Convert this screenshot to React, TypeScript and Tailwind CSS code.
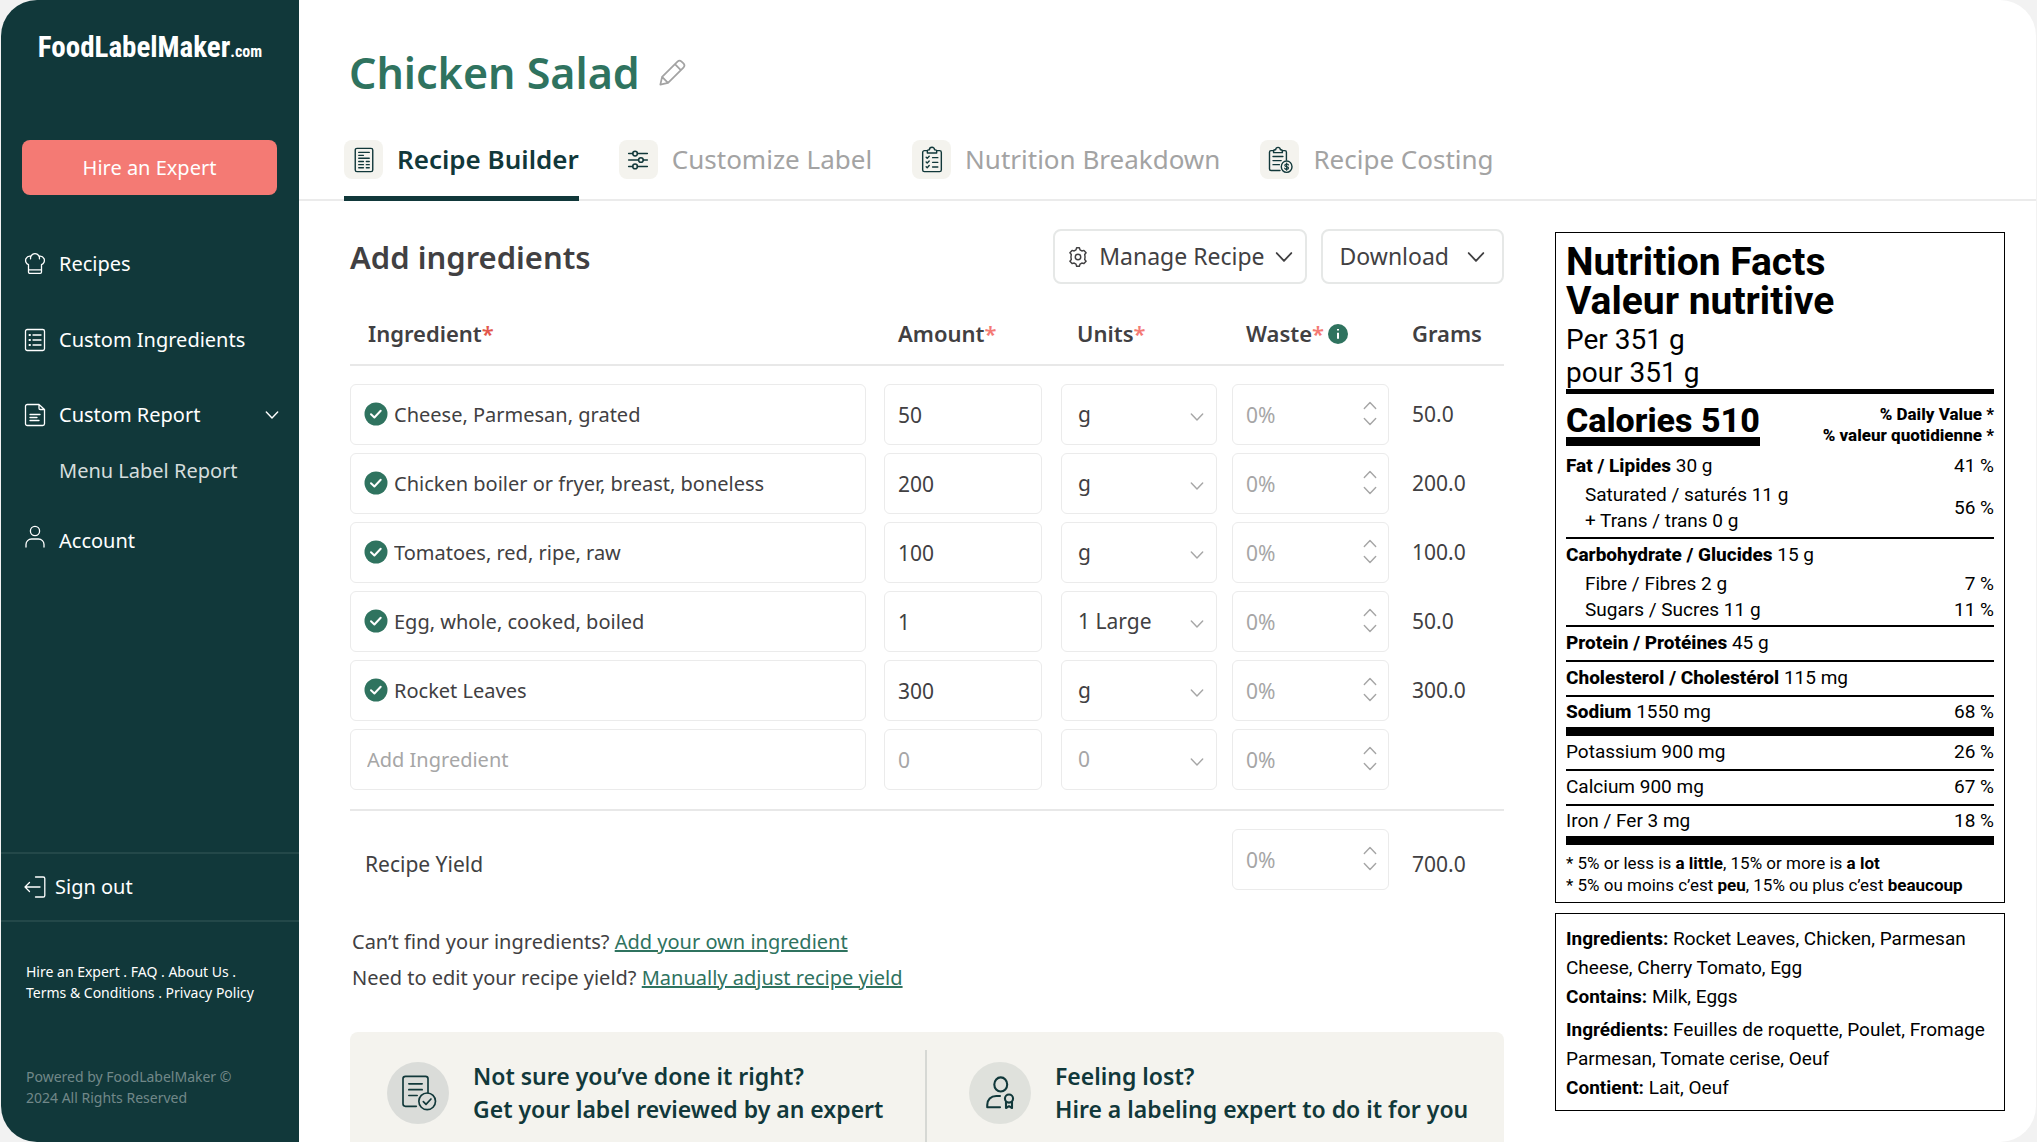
import { useState } from 'react';
import type { ReactNode } from 'react';

const navLink = 'flex items-center text-[20px] leading-8';

const ingredients = [
  { name: 'Cheese, Parmesan, grated', amount: '50', unit: 'g', grams: '50.0' },
  { name: 'Chicken boiler or fryer, breast, boneless', amount: '200', unit: 'g', grams: '200.0' },
  { name: 'Tomatoes, red, ripe, raw', amount: '100', unit: 'g', grams: '100.0' },
  { name: 'Egg, whole, cooked, boiled', amount: '1', unit: '1 Large', grams: '50.0' },
  { name: 'Rocket Leaves', amount: '300', unit: 'g', grams: '300.0' },
];

function Icon({ size, width = 1.3, children }: { size: string; width?: number; children: ReactNode }) {
  return (
    <svg
      viewBox="0 0 24 24"
      className={`${size} shrink-0`}
      fill="none"
      stroke="currentColor"
      strokeWidth={width}
      strokeLinecap="round"
      strokeLinejoin="round"
      aria-hidden="true"
    >
      {children}
    </svg>
  );
}

function Chevron({ size, up = false }: { size: string; up?: boolean }) {
  return (
    <svg viewBox="0 0 16 10" className={`${size} shrink-0`} fill="none" stroke="currentColor" strokeWidth="1.6" strokeLinecap="round" strokeLinejoin="round" aria-hidden="true">
      <path d={up ? 'M1.5 8.5 8 1.5l6.5 7' : 'M1.5 1.5 8 8.5l6.5-7'} />
    </svg>
  );
}

function ChefHat() {
  return (
    <Icon size="h-6 w-6">
      <path d="M5.5 12.7A4.6 4.6 0 0 1 3 6.6a4.6 4.6 0 0 1 5-2.4 4.4 4.4 0 0 1 8 0 4.6 4.6 0 0 1 5 2.4 4.6 4.6 0 0 1-2.5 6.100v7.3a1.3 1.3 0 0 1-1.3 1.3H6.8a1.3 1.3 0 0 1-1.3-1.3zM5.5 17.8h13M8 4.2c-.5.9-.6 1.7-.4 2.6M16 4.2c.5.9.6 1.7.4 2.6" />
    </Icon>
  );
}

function ListBox() {
  return (
    <Icon size="h-6 w-6">
      <rect x="2.5" y="1.5" width="19" height="21" rx="1.8" />
      <path d="M10 7h8M10 12h8M10 17h8" />
      <path d="M6.5 7h.5M6.5 12h.5M6.5 17h.5" strokeWidth="2" />
    </Icon>
  );
}

function ReportFile() {
  return (
    <Icon size="h-6 w-6">
      <path d="M16 1.5H4.3a1.8 1.8 0 0 0-1.8 1.8v17.4a1.8 1.8 0 0 0 1.8 1.8h15.4a1.8 1.8 0 0 0 1.8-1.8V6.5zM16 1.5v3.8a1.2 1.2 0 0 0 1.2 1.2h4.3M7 11.5h10M7 14.5h7M7 17.5h9" />
    </Icon>
  );
}

function Person() {
  return (
    <Icon size="h-6 w-6 self-start">
      <circle cx="12" cy="6" r="4.6" />
      <path d="M3 22v-2.5A5.5 5.5 0 0 1 8.5 14h7a5.5 5.5 0 0 1 5.5 5.5V22" />
    </Icon>
  );
}

function SignOut() {
  return (
    <Icon size="h-6 w-6">
      <path d="M12.5 2h7.7a1.6 1.6 0 0 1 1.6 1.6v16.8a1.6 1.6 0 0 1-1.6 1.6h-7.7M17 12H2M6.5 7.5 2 12l4.5 4.5" />
    </Icon>
  );
}

function RecipeSheet() {
  return (
    <Icon size="h-7 w-7" width={1.2}>
      <rect x="4.5" y="2" width="15" height="20" rx="1.5" />
      <path d="M7.5 5.5h9M7.5 8h4M7.5 10.5h9M7.5 13.3h4M14 13.3h2.5M7.5 16h4M14 16h2.5M7.5 18.7h4M14 18.7h2.5" />
    </Icon>
  );
}

function Sliders() {
  return (
    <Icon size="h-7 w-7" width={1.3}>
      <path d="M4 6.5h3.5M11.5 6.5H20M4 12h8.5M16.5 12H20M4 17.5h3.5M11.5 17.5H20" />
      <circle cx="9.5" cy="6.5" r="2" />
      <circle cx="14.5" cy="12" r="2" />
      <circle cx="9.5" cy="17.5" r="2" />
    </Icon>
  );
}

function Checklist() {
  return (
    <Icon size="h-7 w-7" width={1.2}>
      <path d="M8 4H5.5A1.5 1.5 0 0 0 4 5.5v15A1.5 1.5 0 0 0 5.5 22h13a1.5 1.5 0 0 0 1.5-1.5v-15A1.5 1.5 0 0 0 18.5 4H16" />
      <path d="M8 6h8V4.3a1 1 0 0 0-1-1h-.8a2.2 2.2 0 0 0-4.4 0H9a1 1 0 0 0-1 1zM7 9.7l.9.9 1.7-1.8M12.5 10h4.500M7 13.7l.9.9 1.7-1.8M12.5 14h4.500M7 17.7l.9.9 1.7-1.8M12.5 18h4.500" />
    </Icon>
  );
}

function CostSheet() {
  return (
    <Icon size="h-7 w-7" width={1.2}>
      <path d="M6.5 4H4.3A1.3 1.3 0 0 0 3 5.3v14.4A1.3 1.3 0 0 0 4.3 21H12M14 4h2.2a1.3 1.3 0 0 1 1.3 1.3V12" />
      <path d="M6.5 5.7H14V4.2a1 1 0 0 0-1-1h-.7a2 2 0 0 0-4 0h-.8a1 1 0 0 0-1 1zM6 9h8.5M6 12.5h7M6 16h5.5" />
      <ellipse cx="17.7" cy="17.7" rx="4.6" ry="4.9" />
      <path d="M19.3 16.3c-.3-.7-.9-.9-1.6-.9-.9 0-1.6.4-1.6 1.1 0 1.6 3.2.8 3.2 2.4 0 .7-.7 1.1-1.6 1.1-.8 0-1.4-.3-1.7-1M17.7 14.6v6.2" strokeWidth="1" />
    </Icon>
  );
}

function Pencil() {
  return (
    <Icon size="h-7 w-7" width={1.5}>
      <path d="M2 22l1.5-6.6L16.7 2.2a2.5 2.5 0 0 1 3.5 0l1.6 1.6a2.5 2.5 0 0 1 0 3.5L8.6 20.5zM3.5 15.4l5.1 5.1M14.5 4.4l5.1 5.1" />
    </Icon>
  );
}

function Cog() {
  return (
    <Icon size="h-[22px] w-[22px]" width={1.6}>
      <circle cx="12" cy="12" r="3" />
      <path d="M9.8 4.2 10.5 2h3l.7 2.2 2 1.2 2.3-.6L20.8 7.4l-1.5 1.8.4 2.8-.4 2.8 1.5 1.8-2.3 2.6-2.3-.6-2 1.2-.7 2.2h-3l-.7-2.2-2-1.2-2.3.6-2.3-2.6 1.5-1.8-.4-2.8.4-2.8-1.5-1.8 2.3-2.6 2.3.6z" />
    </Icon>
  );
}

function ReviewSheet() {
  return (
    <Icon size="h-10 w-10" width={1}>
      <path d="M11 20H4.5A1.5 1.5 0 0 1 3 18.5v-15A1.5 1.5 0 0 1 4.5 2h12A1.5 1.5 0 0 1 18 3.5V12M6.5 6.5h8M6.5 10h8M6.5 13.5h5" />
      <circle cx="17.5" cy="17" r="5" />
      <path d="m15.2 17.2 1.6 1.6 3-3.2" />
    </Icon>
  );
}

function ExpertBadge() {
  return (
    <Icon size="h-9 w-9" width={1.4}>
      <ellipse cx="12.5" cy="6.3" rx="4.3" ry="4.7" />
      <path d="M12 21.5H3.5v-1.5c0-3.6 2.4-6 6-6H12" />
      <circle cx="18" cy="15.7" r="2.7" />
      <path d="M16 18v4l2-1.2 2 1.2v-4" />
    </Icon>
  );
}

function CheckMark() {
  return (
    <svg viewBox="0 0 24 24" className="pointer-events-none absolute left-[14px] top-[18px] h-6 w-6" aria-hidden="true">
      <circle cx="12" cy="12" r="11.5" fill="#2f735f" />
      <path d="m7 12.3 3.4 3.2 6.3-6.7" fill="none" stroke="#fff" strokeWidth="2" strokeLinecap="round" strokeLinejoin="round" />
    </svg>
  );
}

const field = 'h-[61px] w-full rounded-md border border-[#ebebeb] bg-white placeholder:text-[#a6a6a6]';

function AmountField({ label, value }: { label: string; value?: string }) {
  return <input aria-label={label} defaultValue={value} placeholder="0" className={`${field} px-[13px]`} />;
}

function UnitSelect({ label, value, muted = false }: { label: string; value: string; muted?: boolean }) {
  return (
    <div className="relative">
      <select aria-label={label} defaultValue={value} className={`${field} appearance-none px-4 ${muted ? 'text-[#a6a6a6]' : 'text-[#414042]'}`}>
        <option>{value}</option>
      </select>
      <span className="pointer-events-none absolute right-[13px] top-7 text-[#a6a6a6]">
        <Chevron size="h-[10px] w-[14px]" />
      </span>
    </div>
  );
}

function WasteField({ label }: { label: string }) {
  const [waste, setWaste] = useState(0);
  return (
    <div className="relative">
      <input
        aria-label={label}
        value={waste ? `${waste}%` : ''}
        onChange={(e) => setWaste(parseInt(e.target.value) || 0)}
        placeholder="0%"
        className={`${field} pl-[13px] pr-10`}
      />
      <div className="absolute right-3 top-[14px] flex flex-col gap-[2px] text-[#a6a6a6]">
        <button type="button" aria-label={`Increase ${label}`} className="flex h-[14px] items-center" onClick={() => setWaste(waste + 1)}>
          <Chevron size="h-[9px] w-[14px]" up />
        </button>
        <button type="button" aria-label={`Decrease ${label}`} className="flex h-[14px] items-center" onClick={() => setWaste(Math.max(0, waste - 1))}>
          <Chevron size="h-[9px] w-[14px]" />
        </button>
      </div>
    </div>
  );
}

function Tab({ icon, label, active = false }: { icon: ReactNode; label: string; active?: boolean }) {
  return (
    <a
      href="#"
      className={`flex h-[61px] items-start gap-[14px] border-b-[5px] text-[26px] ${
        active ? 'border-[#11383a] font-semibold text-[#11383a]' : 'border-transparent text-[#a3a3a3]'
      }`}
    >
      <span className="flex h-[39px] w-[39px] items-center justify-center rounded-lg bg-[#f4f3ee] text-[#11383a]">{icon}</span>
      <span className="leading-[38px]">{label}</span>
    </a>
  );
}

function Sidebar() {
  return (
    <aside className="flex w-[298px] shrink-0 flex-col bg-[#11383a]">
      <a href="#" className="mt-6 flex h-[46px] items-baseline justify-center whitespace-nowrap font-['Roboto_Condensed','Liberation_Sans_Narrow',sans-serif] text-[29px] font-bold leading-[46px] text-white">
        FoodLabelMaker<span className="text-[16px]">.com</span>
      </a>
      <button type="button" className="ml-[21px] mr-[22px] mt-[70px] h-[55px] rounded-lg bg-[#f47a74] text-[20px] text-white">
        Hire an Expert
      </button>

      <nav className="mt-[53px] flex flex-col pl-[22px] pr-5 text-white">
        <a href="#" className={`${navLink} gap-3`}>
          <ChefHat />
          Recipes
        </a>
        <a href="#" className={`${navLink} mt-11 gap-3`}>
          <ListBox />
          Custom Ingredients
        </a>
        <button type="button" className={`${navLink} mt-[43px] gap-3`} aria-expanded="true">
          <ReportFile />
          Custom Report
          <span className="ml-auto">
            <Chevron size="h-[10px] w-[14px]" />
          </span>
        </button>
        <a href="#" className={`${navLink} mt-6 pl-9 text-[#d5dddd]`}>
          Menu Label Report
        </a>
        <a href="#" className={`${navLink} mt-[38px] gap-3`}>
          <Person />
          Account
        </a>
      </nav>

      <div className="mt-auto border-y-2 border-[#234849] text-white">
        <a href="#" className={`${navLink} h-[66px] gap-2 pl-[22px]`}>
          <SignOut />
          Sign out
        </a>
      </div>
      <div className="mt-[39px] pl-[25px] text-[14px] leading-[21px] text-white">
        <a href="#">Hire an Expert</a> . <a href="#">FAQ</a> . <a href="#">About Us</a> .
        <br />
        <a href="#">Terms &amp; Conditions</a> . <a href="#">Privacy Policy</a>
      </div>
      <p className="mb-[34px] mt-[63px] pl-[25px] text-[14px] leading-[21px] text-[#718889]">
        Powered by FoodLabelMaker ©
        <br />
        2024 All Rights Reserved
      </p>
    </aside>
  );
}

function IngredientTable() {
  return (
    <table className="w-full table-fixed text-left text-[21px] text-[#414042]">
      <colgroup>
        <col />
        <col className="w-[177px]" />
        <col className="w-[171px]" />
        <col className="w-[180px]" />
        <col className="w-[92px]" />
      </colgroup>
      <thead className="text-[22px]">
        <tr className="h-[62px] border-b-2 border-[#e8e8e8]">
          <th scope="col" className="pl-[18px] font-semibold">
            Ingredient<span className="text-[#e2574c]">*</span>
          </th>
          <th scope="col" className="pl-[14px] font-semibold">
            Amount<span className="text-[#f47a74]">*</span>
          </th>
          <th scope="col" className="pl-4 font-semibold">
            Units<span className="text-[#f47a74]">*</span>
          </th>
          <th scope="col" className="pl-[14px] font-semibold">
            <span className="flex items-center">
              Waste<span className="text-[#f47a74]">*</span>
              <svg viewBox="0 0 20 20" className="ml-1 h-5 w-5" role="img" aria-label="About waste">
                <circle cx="10" cy="10" r="10" fill="#2f735f" />
                <path d="M10 8.8v6M10 5v1.500" stroke="#fff" strokeWidth="2" />
              </svg>
            </span>
          </th>
          <th scope="col" className="font-semibold">Grams</th>
        </tr>
      </thead>
      <tbody>
        <tr className="h-[15px]" aria-hidden="true" />
        {ingredients.map((item) => (
          <tr key={item.name}>
            <td className="py-1 pr-[18px] text-[20px]">
              <div className="relative">
                <CheckMark />
                <input aria-label="Ingredient" defaultValue={item.name} className={`${field} pl-[43px] pr-3`} />
              </div>
            </td>
            <td className="py-1 pr-[19px]">
              <AmountField label={`Amount of ${item.name}`} value={item.amount} />
            </td>
            <td className="py-1 pr-[15px]">
              <UnitSelect label={`Units of ${item.name}`} value={item.unit} />
            </td>
            <td className="py-1 pr-[23px]">
              <WasteField label={`Waste of ${item.name}`} />
            </td>
            <td>{item.grams}</td>
          </tr>
        ))}
        <tr>
          <td className="py-1 pr-[18px] text-[20px]">
            <input aria-label="Add ingredient" placeholder="Add Ingredient" className={`${field} px-4`} />
          </td>
          <td className="py-1 pr-[19px]">
            <AmountField label="Amount" />
          </td>
          <td className="py-1 pr-[15px]">
            <UnitSelect label="Units" value="0" muted />
          </td>
          <td className="py-1 pr-[23px]">
            <WasteField label="Waste" />
          </td>
          <td />
        </tr>
        <tr className="h-4 border-b-2 border-[#e8e8e8]" aria-hidden="true" />
      </tbody>
      <tfoot>
        <tr>
          <th scope="row" className="pl-[15px] pt-7 font-normal">Recipe Yield</th>
          <td />
          <td />
          <td className="pr-[23px] pt-[18px]">
            <WasteField label="Recipe yield waste" />
          </td>
          <td className="pt-7">700.0</td>
        </tr>
      </tfoot>
    </table>
  );
}

function Rule({ thick = false }: { thick?: boolean }) {
  return <hr className={thick ? 'h-[9px] border-0 bg-black' : 'h-[2px] border-0 bg-black'} />;
}

function Nutrient({ name, amount, dv, height = 'h-[33px]' }: { name?: string; amount: string; dv?: string; height?: string }) {
  return (
    <div className={`flex items-center justify-between ${height}`}>
      <span>
        {name && <b className="font-extrabold">{name}</b>} {amount}
      </span>
      <span>{dv}</span>
    </div>
  );
}

function NutritionLabel() {
  return (
    <section className="mt-[31px] w-[450px] font-[Roboto,sans-serif] text-black">
      <div className="border border-black px-[10px] pb-[6px] pt-[10px] text-[19px]">
        <h2 className="text-[39px] font-bold leading-[39px]">
          Nutrition Facts
          <br />
          Valeur nutritive
        </h2>
        <p className="pt-[2px] text-[28px] leading-[33px]">
          Per 351 g
          <br />
          pour 351 g
        </p>
        <hr className="h-[5px] border-0 bg-black" />
        <div className="flex items-start justify-between pt-[9px]">
          <div className="border-b-[9px] border-black text-[34px] font-extrabold leading-[34px]">Calories 510</div>
          <div className="pt-px text-right text-[17px] font-extrabold leading-[21px]">
            % Daily Value *
            <br />
            % valeur quotidienne *
          </div>
        </div>
        <div className="mt-1">
          <Nutrient name="Fat / Lipides" amount="30 g" dv="41 %" height="h-8" />
          <div className="flex items-center justify-between pb-[3px] pl-[19px] leading-[26px]">
            <span>
              Saturated / saturés 11 g
              <br />
              + Trans / trans 0 g
            </span>
            <span>56 %</span>
          </div>
        </div>
        <Rule />
        <Nutrient name="Carbohydrate / Glucides" amount="15 g" height="h-8" />
        <div className="pb-[2px] pl-[19px] leading-[26px]">
          <div className="flex justify-between">
            <span>Fibre / Fibres 2 g</span>
            <span>7 %</span>
          </div>
          <div className="flex justify-between">
            <span>Sugars / Sucres 11 g</span>
            <span>11 %</span>
          </div>
        </div>
        <Rule />
        <Nutrient name="Protein / Protéines" amount="45 g" />
        <Rule />
        <Nutrient name="Cholesterol / Cholestérol" amount="115 mg" />
        <Rule />
        <Nutrient name="Sodium" amount="1550 mg" dv="68 %" height="h-[30px]" />
        <Rule thick />
        <Nutrient amount="Potassium 900 mg" dv="26 %" />
        <Rule />
        <Nutrient amount="Calcium 900 mg" dv="67 %" />
        <Rule />
        <Nutrient amount="Iron / Fer 3 mg" dv="18 %" height="h-[30px]" />
        <Rule thick />
        <p className="whitespace-nowrap pt-[7px] text-[17px] leading-[22px]">
          * 5% or less is <b>a little</b>, 15% or more is <b>a lot</b>
          <br />
          * 5% ou moins c’est <b>peu</b>, 15% ou plus c’est <b>beaucoup</b>
        </p>
      </div>

      <div className="mt-[10px] border border-black px-[10px] pb-2 pt-[10px] text-[19px] leading-[29px]">
        <p>
          <b>Ingredients:</b> Rocket Leaves, Chicken, Parmesan Cheese, Cherry Tomato, Egg
        </p>
        <p>
          <b>Contains:</b> Milk, Eggs
        </p>
        <p className="mt-1">
          <b>Ingrédients:</b> Feuilles de roquette, Poulet, Fromage Parmesan, Tomate cerise, Oeuf
        </p>
        <p>
          <b>Contient:</b> Lait, Oeuf
        </p>
      </div>
    </section>
  );
}

export default function App() {
  return (
    <div className="min-h-screen bg-[#f2f2f2] px-px">
      <div className="flex min-h-screen overflow-hidden rounded-[36px] bg-white font-['Noto_Sans',sans-serif]">
        <Sidebar />

        <main className="flex min-w-0 flex-1 flex-col">
          {/* Recipe title and tabs */}
          <header className="border-b-2 border-[#ebebeb] pl-[45px]">
            <div className="flex items-center gap-[18px] pl-[5px] pt-[44px]">
              <h1 className="text-[43px] font-semibold leading-[58px] text-[#2f735f]">Chicken Salad</h1>
              <button type="button" aria-label="Rename recipe" className="text-[#a3a3a3]">
                <Pencil />
              </button>
            </div>
            <nav className="-mb-[2px] mt-[38px] flex gap-10 whitespace-nowrap">
              <Tab icon={<RecipeSheet />} label="Recipe Builder" active />
              <Tab icon={<Sliders />} label="Customize Label" />
              <Tab icon={<Checklist />} label="Nutrition Breakdown" />
              <Tab icon={<CostSheet />} label="Recipe Costing" />
            </nav>
          </header>

          <div className="flex flex-1 gap-[51px] pl-[51px] pr-[31px]">
            <div className="flex min-w-0 flex-1 flex-col pt-7">
              <div className="flex items-center gap-[14px]">
                <h2 className="mr-auto text-[31px] font-semibold leading-[48px] text-[#414042]">Add ingredients</h2>
                <button type="button" className="flex h-[55px] items-center gap-[10px] rounded-lg border-2 border-[#e6e8e7] px-3 text-[23px] text-[#414042]">
                  <Cog />
                  Manage Recipe
                  <Chevron size="h-3 w-[18px]" />
                </button>
                <button type="button" className="flex h-[55px] items-center gap-[18px] rounded-lg border-2 border-[#e6e8e7] px-[17px] text-[23px] text-[#414042]">
                  Download
                  <Chevron size="h-3 w-[18px]" />
                </button>
              </div>

              <div className="mt-[19px]">
                <IngredientTable />
              </div>

              <div className="mt-[34px] pl-[2px] text-[20px] leading-9 text-[#414042]">
                <p>
                  Can’t find your ingredients?{' '}
                  <a href="#" className="text-[#2f735f] underline">Add your own ingredient</a>
                </p>
                <p>
                  Need to edit your recipe yield?{' '}
                  <a href="#" className="text-[#2f735f] underline">Manually adjust recipe yield</a>
                </p>
              </div>

              {/* Expert help */}
              <div className="mt-9 grid flex-1 grid-cols-2 rounded-t-lg bg-[#f4f3ee] pt-[18px] text-[23px] font-semibold leading-[33px] text-[#11383a]">
                <a href="#" className="flex items-start gap-6 border-r-2 border-[#d6d8d4] pl-[37px]">
                  <span className="mt-3 flex h-[62px] w-[62px] shrink-0 items-center justify-center rounded-full bg-[#dadcd9]">
                    <ReviewSheet />
                  </span>
                  <span className="whitespace-nowrap pt-[10px]">
                    Not sure you’ve done it right?
                    <br />
                    Get your label reviewed by an expert
                  </span>
                </a>
                <a href="#" className="flex items-start gap-6 pl-[42px]">
                  <span className="mt-3 flex h-[62px] w-[62px] shrink-0 items-center justify-center rounded-full bg-[#dfe1dc]">
                    <ExpertBadge />
                  </span>
                  <span className="whitespace-nowrap pt-[10px]">
                    Feeling lost?
                    <br />
                    Hire a labeling expert to do it for you
                  </span>
                </a>
              </div>
            </div>

            <NutritionLabel />
          </div>
        </main>
      </div>
    </div>
  );
}
